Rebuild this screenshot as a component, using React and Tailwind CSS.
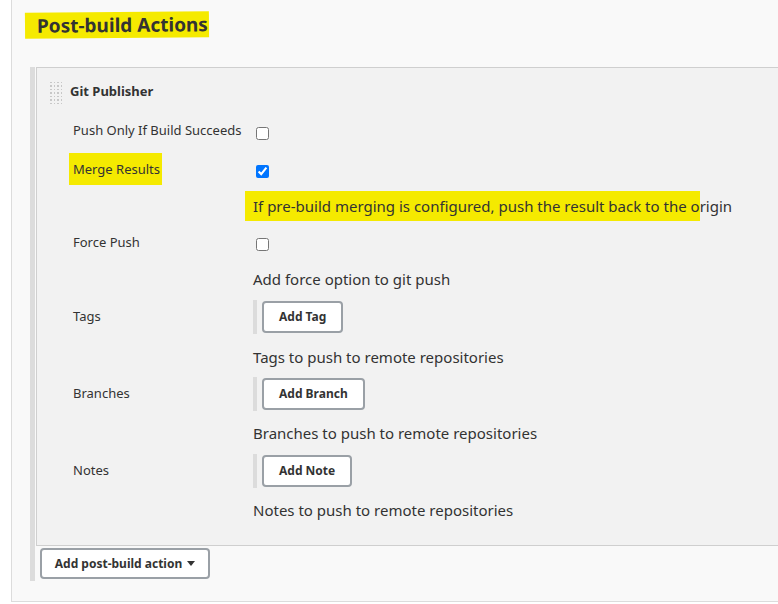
import React from 'react';

const font = { fontFamily: '"Noto Sans", "Open Sans", Arial, sans-serif' };

const Checkbox = ({ checked }) => (
    <input
        type="checkbox"
        defaultChecked={checked}
        className="w-[13px] h-[13px] m-0 accent-[#0075ff]"
    />
);

const AddButton = ({ label }) => (
    <div className="flex items-stretch h-[34px]">
        <div className="w-[4px] bg-[#dcdcdc]"></div>
        <button className="ml-[5px] my-[1px] px-[15px] bg-white border-2 border-[#9aa0a6] rounded-[4px] text-[12px] font-bold text-[#333]">
            {label}
        </button>
    </div>
);

const Row = ({ h, label, highlight, children }) => (
    <div className={`flex items-center ${h}`}>
        <div className="w-[180px] text-[13px] text-[#333]">
            {highlight ? (
                <span className="bg-[#f5ea00] -ml-[4px] pl-[4px] pr-[2px] py-[7px]">{label}</span>
            ) : (
                label
            )}
        </div>
        <div className="flex items-center">{children}</div>
    </div>
);

const Desc = ({ h, children }) => (
    <div className={`flex items-center ${h} pl-[180px] text-[15px] text-[#333]`}>{children}</div>
);

export default function App() {
    return (
        <div className="w-[778px] h-[604px] bg-white overflow-hidden" style={font}>
            <div className="ml-[11px] h-[602px] border-l border-b border-[#dcdcdc] bg-[#f9f9f9] overflow-hidden">
                {/* heading */}
                <div className="pt-[12px] pl-[13px] h-[67px]">
                    <h2 className="inline-block bg-[#f5ea00] pl-[12px] pr-[1px] h-[26px] leading-[26px] text-[19px] font-bold text-[#333] -rotate-[0.5deg]">
                        Post-build Actions
                    </h2>
                </div>

                {/* post build section */}
                <div className="ml-[18px] border-l-[5px] border-[#dcdcdc] pb-[2px]">
                    <div className="ml-[1px] bg-[#f2f2f2] border-y border-l border-[#cfcfcf] pl-[36px] pb-[14px]">
                        <div className="flex items-center h-[43px] -ml-[23px] pt-[4px]">
                            <div className="grid grid-cols-4 gap-[2px] w-[12px] h-[20px] content-between">
                                {Array.from({ length: 28 }).map((_, i) => (
                                    <span key={i} className="w-[1.5px] h-[1.5px] bg-[#c8c8c8]"></span>
                                ))}
                            </div>
                            <span className="ml-[8px] text-[13px] font-bold text-[#333]">Git Publisher</span>
                        </div>

                        <Row h="h-[40px]" label="Push Only If Build Succeeds">
                            <span className="ml-[3px] mt-[4px] flex"><Checkbox /></span>
                        </Row>
                        <Row h="h-[38px]" label="Merge Results" highlight>
                            <span className="ml-[3px] mt-[3px] flex"><Checkbox checked /></span>
                        </Row>
                        <Desc h="h-[34px]">
                            <span className="bg-[#f5ea00] -ml-[8px] pl-[8px] py-[4px]">If pre-build merging is configured, push the result back to the o</span>
                            <span>rigin</span>
                        </Desc>
                        <Row h="h-[40px]" label="Force Push">
                            <span className="ml-[3px] mt-[3px] flex"><Checkbox /></span>
                        </Row>
                        <Desc h="h-[32px]">Add force option to git push</Desc>
                        <Row h="h-[44px]" label="Tags">
                            <AddButton label="Add Tag" />
                        </Row>
                        <Desc h="h-[36px]">Tags to push to remote repositories</Desc>
                        <Row h="h-[38px]" label="Branches">
                            <AddButton label="Add Branch" />
                        </Row>
                        <Desc h="h-[40px]">Branches to push to remote repositories</Desc>
                        <Row h="h-[36px]" label="Notes">
                            <AddButton label="Add Note" />
                        </Row>
                        <Desc h="h-[42px]">Notes to push to remote repositories</Desc>
                    </div>

                    <button className="ml-[5px] mt-[2px] h-[31px] w-[170px] flex items-center justify-center gap-[5px] bg-white border-2 border-[#9aa0a6] rounded-[4px] text-[12px] font-bold text-[#333]">
                        Add post-build action
                        <svg width="8" height="5" viewBox="0 0 8 5"><path d="M0 0h8L4 5z" fill="#333" /></svg>
                    </button>
                </div>
            </div>
        </div>
    );
}
